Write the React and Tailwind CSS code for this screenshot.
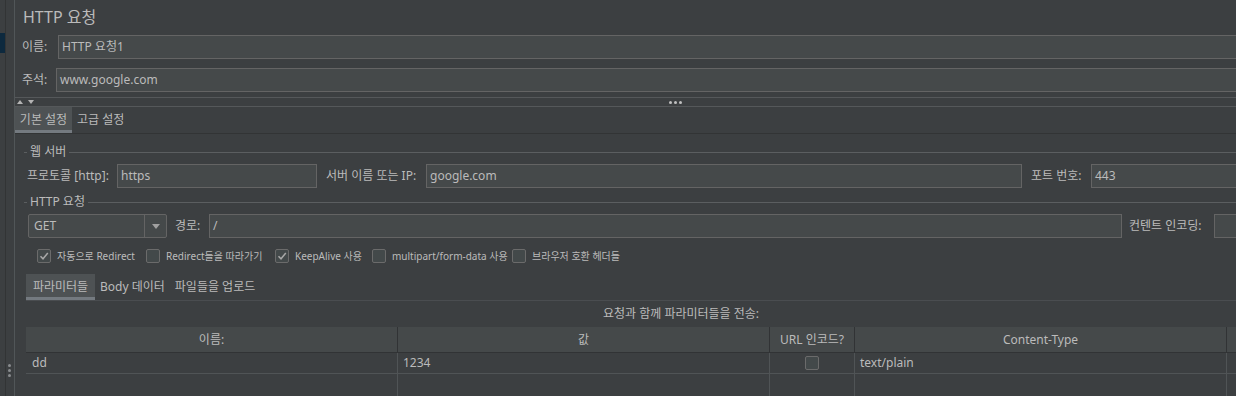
import React from 'react';

function Field({ value, className = '' }) {
  return (
    <div className={`h-[24px] shrink-0 border border-[#646464] bg-[#45494a] px-[3px] flex items-center text-[12px] text-[#bbbbbb] ${className}`}>
      {value}
    </div>
  );
}

function Check({ checked }) {
  return (
    <div className="w-[14px] h-[14px] shrink-0 rounded-[2px] border border-[#6b6b6b] bg-[#43494a] flex items-center justify-center">
      {checked && (
        <svg width="12" height="12" viewBox="0 0 12 12">
          <path d="M2.5 6.2 L5 8.8 L9.8 3" fill="none" stroke="#a8a8a8" strokeWidth="1.5" />
        </svg>
      )}
    </div>
  );
}

function GroupTitle({ label }) {
  return (
    <div className="h-[16px] flex items-center">
      <div className="w-[3px] h-px bg-[#5b5e60]" />
      <span className="px-[3px] text-[12px] leading-none">{label}</span>
      <div className="flex-1 h-px bg-[#5b5e60]" />
    </div>
  );
}

const options = [
  { label: '자동으로 Redirect', checked: true, w: 'w-[109px]' },
  { label: 'Redirect들을 따라가기', checked: false, w: 'w-[129px]' },
  { label: 'KeepAlive 사용', checked: true, w: 'w-[97px]' },
  { label: 'multipart/form-data 사용', checked: false, w: 'w-[140px]' },
  { label: '브라우저 호환 헤더들', checked: false, w: 'w-[120px]' },
];

export default function App() {
  return (
    <div className="w-[1236px] h-[396px] overflow-hidden bg-[#3c3f41] text-[#bbbbbb] flex font-['Noto_Sans','Noto_Sans_CJK_KR',sans-serif]">
      {/* tree + divider */}
      <div className="w-[5px] shrink-0 pt-[33px]">
        <div className="h-[20px] bg-[#0d293e]" />
      </div>
      <div className="w-[9px] shrink-0 border-l border-[#323435] flex flex-col justify-end items-center pb-[19px] pr-[1px]">
        <div className="flex flex-col gap-[2px]">
          <div className="w-[3px] h-[3px] rounded-full bg-[#8a8d8f]" />
          <div className="w-[3px] h-[3px] rounded-full bg-[#8a8d8f]" />
          <div className="w-[3px] h-[3px] rounded-full bg-[#8a8d8f]" />
        </div>
      </div>

      {/* main panel */}
      <div className="w-[1322px] shrink-0 border-l border-[#515658]">
        <div className="h-[35px] pl-[8px] flex items-center text-[16px] pb-[1px]">HTTP 요청</div>

        <div className="h-[24px] pl-[7px] flex items-center">
          <span className="w-[36px] shrink-0 text-[12px]">이름:</span>
          <Field value="HTTP 요청1" className="flex-1" />
        </div>
        <div className="mt-[9px] h-[24px] pl-[7px] flex items-center">
          <span className="w-[34px] shrink-0 text-[12px]">주석:</span>
          <Field value="www.google.com" className="flex-1" />
        </div>

        {/* splitter */}
        <div className="mt-[5px] h-[10px] border-y border-[#55585a] relative flex items-center justify-center">
          <div className="absolute left-[2px] top-[1px] flex gap-[5px]">
            <svg width="6" height="5" viewBox="0 0 6 5"><path d="M0 5 L3 1 L6 5 Z" fill="#b4b4b4" /></svg>
            <svg width="6" height="5" viewBox="0 0 6 5"><path d="M0 1 L3 5 L6 1 Z" fill="#b4b4b4" /></svg>
          </div>
          <div className="flex gap-[2px]">
            <div className="w-[3px] h-[3px] rounded-full bg-[#c0c0c0]" />
            <div className="w-[3px] h-[3px] rounded-full bg-[#c0c0c0]" />
            <div className="w-[3px] h-[3px] rounded-full bg-[#c0c0c0]" />
          </div>
        </div>

        {/* tabs */}
        <div className="h-[27px] flex items-stretch border-b border-[#323435] text-[12px]">
          <div className="w-[57px] bg-[#4e5254] border-b-[3px] border-[#747a80] flex items-center justify-center pt-[2px]">기본 설정</div>
          <div className="pl-[5px] flex items-center pb-[1px]">고급 설정</div>
        </div>

        {/* content */}
        <div className="pl-[9px] pt-[10px]">
          <GroupTitle label="웹 서버" />
          <div className="mt-[4px] h-[24px] pl-[3px] flex items-center text-[12px]">
            <span className="w-[90px] shrink-0">프로토콜 [http]:</span>
            <Field value="https" className="w-[200px]" />
            <span className="ml-[9px] w-[100px] shrink-0">서버 이름 또는 IP:</span>
            <Field value="google.com" className="w-[596px]" />
            <span className="ml-[9px] w-[60px] shrink-0">포트 번호:</span>
            <Field value="443" className="flex-1" />
          </div>

          <div className="mt-[6px]">
            <GroupTitle label="HTTP 요청" />
          </div>
          <div className="mt-[4px] h-[24px] pl-[4px] flex items-center text-[12px]">
            <div className="w-[139px] h-[24px] shrink-0 rounded-[2px] border border-[#646464] bg-[#45494a] flex">
              <div className="flex-1 flex items-center pl-[5px]">GET</div>
              <div className="w-[22px] border-l border-[#646464] flex items-center justify-center">
                <svg width="8" height="5" viewBox="0 0 8 5"><path d="M0 0 L8 0 L4 5 Z" fill="#a0a0a0" /></svg>
              </div>
            </div>
            <span className="ml-[8px] w-[34px] shrink-0">경로:</span>
            <Field value="/" className="w-[913px]" />
            <span className="ml-[7px] w-[85px] shrink-0">컨텐트 인코딩:</span>
            <Field value="" className="flex-1" />
          </div>

          <div className="mt-[11px] h-[14px] pl-[13px] flex items-center text-[10px]">
            {options.map((o) => (
              <div key={o.label} className={`${o.w} shrink-0 flex items-center gap-[6px] whitespace-nowrap`}>
                <Check checked={o.checked} />
                <span>{o.label}</span>
              </div>
            ))}
          </div>
        </div>

        {/* parameters area */}
        <div className="pl-[11px] mt-[11px]">
          <div className="h-[27px] flex items-stretch border-b border-[#4a4d50] text-[12px]">
            <div className="w-[69px] bg-[#4e5254] border-b-[3px] border-[#747a80] flex items-center justify-center pt-[2px]">파라미터들</div>
            <div className="pl-[5px] flex items-center pb-[1px]">Body 데이터</div>
            <div className="pl-[10px] flex items-center pb-[1px]">파일들을 업로드</div>
          </div>
          <div className="h-[26px] flex items-center justify-center text-[12px]">요청과 함께 파라미터들을 전송:</div>

          <div className="grid grid-cols-[372px_372px_85px_372px_1fr] text-[12px]">
            <div className="h-[26px] bg-[#45494a] border-r border-b border-[#313335] flex items-center justify-center">이름:</div>
            <div className="h-[26px] bg-[#45494a] border-r border-b border-[#313335] flex items-center justify-center">값</div>
            <div className="h-[26px] bg-[#45494a] border-r border-b border-[#313335] flex items-center justify-center whitespace-nowrap">URL 인코드?</div>
            <div className="h-[26px] bg-[#45494a] border-r border-b border-[#313335] flex items-center justify-center">Content-Type</div>
            <div className="h-[26px] bg-[#45494a] border-b border-[#313335]" />

            <div className="h-[21px] border-r border-b border-[#505456] flex items-center pl-[6px]">dd</div>
            <div className="h-[21px] border-r border-b border-[#505456] flex items-center pl-[5px]">1234</div>
            <div className="h-[21px] border-r border-b border-[#505456] flex items-center justify-center">
              <Check checked={false} />
            </div>
            <div className="h-[21px] border-r border-b border-[#505456] flex items-center pl-[5px]">text/plain</div>
            <div className="h-[21px] border-b border-[#505456]" />

            <div className="h-[40px] border-r border-[#505456]" />
            <div className="h-[40px] border-r border-[#505456]" />
            <div className="h-[40px] border-r border-[#505456]" />
            <div className="h-[40px] border-r border-[#505456]" />
            <div className="h-[40px]" />
          </div>
        </div>
      </div>
    </div>
  );
}
